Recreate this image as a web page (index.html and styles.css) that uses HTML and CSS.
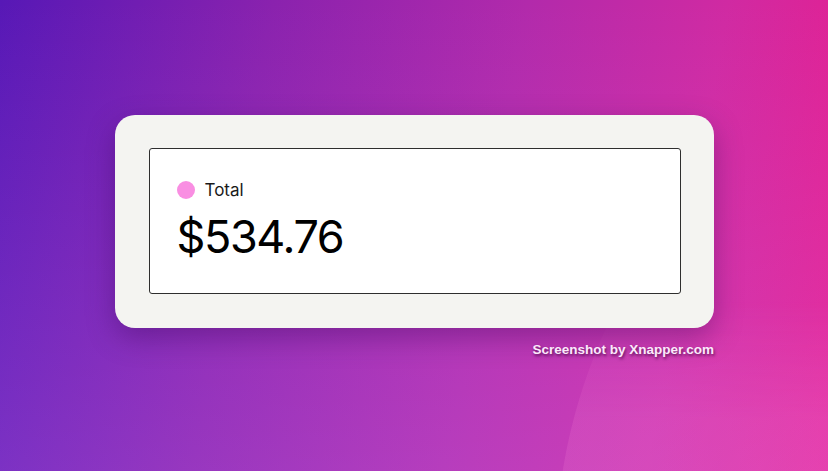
FILE: index.html
```html
<!DOCTYPE html>
<html>
<head>
<meta charset="utf-8">
<link rel="stylesheet" href="styles.css">
</head>
<body>
<main class="stage">
  <div class="frame">
    <section class="card">
      <div class="label">
        <span class="dot"></span>
        <span class="label-text">Total</span>
      </div>
      <div class="amount">$534.76</div>
    </section>
  </div>
  <div class="watermark">Screenshot by Xnapper.com</div>
</main>
</body>
</html>
```
FILE: styles.css
```css
html, body {
  margin: 0;
  padding: 0;
  width: 828px;
  height: 471px;
  overflow: hidden;
}
body {
  position: relative;
  background:
    linear-gradient(to bottom, rgba(190, 140, 255, 0) 0%, rgba(200, 130, 255, 0.22) 100%),
    linear-gradient(100deg, #5718b6 0%, #8a22ae 30%, #b22aab 58%, #d02aa2 80%, #e81e8e 100%);
  font-family: Inter, "Noto Sans", sans-serif;
}
body::before {
  content: "";
  position: absolute;
  left: 0;
  top: 0;
  width: 828px;
  height: 471px;
  background: radial-gradient(circle at 1112px 560px, rgba(255, 140, 220, 0.16) 0 556px, rgba(255, 140, 220, 0) 557px);
  -webkit-mask-image: linear-gradient(to bottom, transparent 0, transparent 300px, #000 420px);
  mask-image: linear-gradient(to bottom, transparent 0, transparent 300px, #000 420px);
  pointer-events: none;
}
.stage {
  position: relative;
  display: flex;
  flex-direction: column;
  align-items: center;
  padding-top: 115px;
}
.frame {
  width: 532px;
  padding: 33px 33px 34px 34px;
  background: #f4f4f1;
  border-radius: 20px;
  box-shadow: 0 10px 28px rgba(50, 0, 80, 0.35);
}
.card {
  background: #ffffff;
  border: 1px solid #2e2e2e;
  border-radius: 3px;
  height: 146px;
  box-sizing: border-box;
  padding: 30px 27px 0 27px;
}
.label {
  display: flex;
  align-items: center;
  gap: 10px;
}
.dot {
  width: 18px;
  height: 18px;
  border-radius: 50%;
  background: #f98ee2;
}
.label-text {
  font-size: 17px;
  color: #1a1a1a;
  line-height: 22px;
}
.amount {
  margin-top: 11px;
  font-size: 45px;
  line-height: 50px;
  color: #000;
  letter-spacing: -1.4px;
}
.watermark {
  align-self: flex-end;
  margin-right: 114px;
  margin-top: 14px;
  font-family: "Liberation Sans", Arial, sans-serif;
  font-weight: bold;
  font-size: 13.5px;
  color: #fbe9fb;
  text-shadow: 1px 2px 3px rgba(60, 0, 60, 0.7);
}
```
